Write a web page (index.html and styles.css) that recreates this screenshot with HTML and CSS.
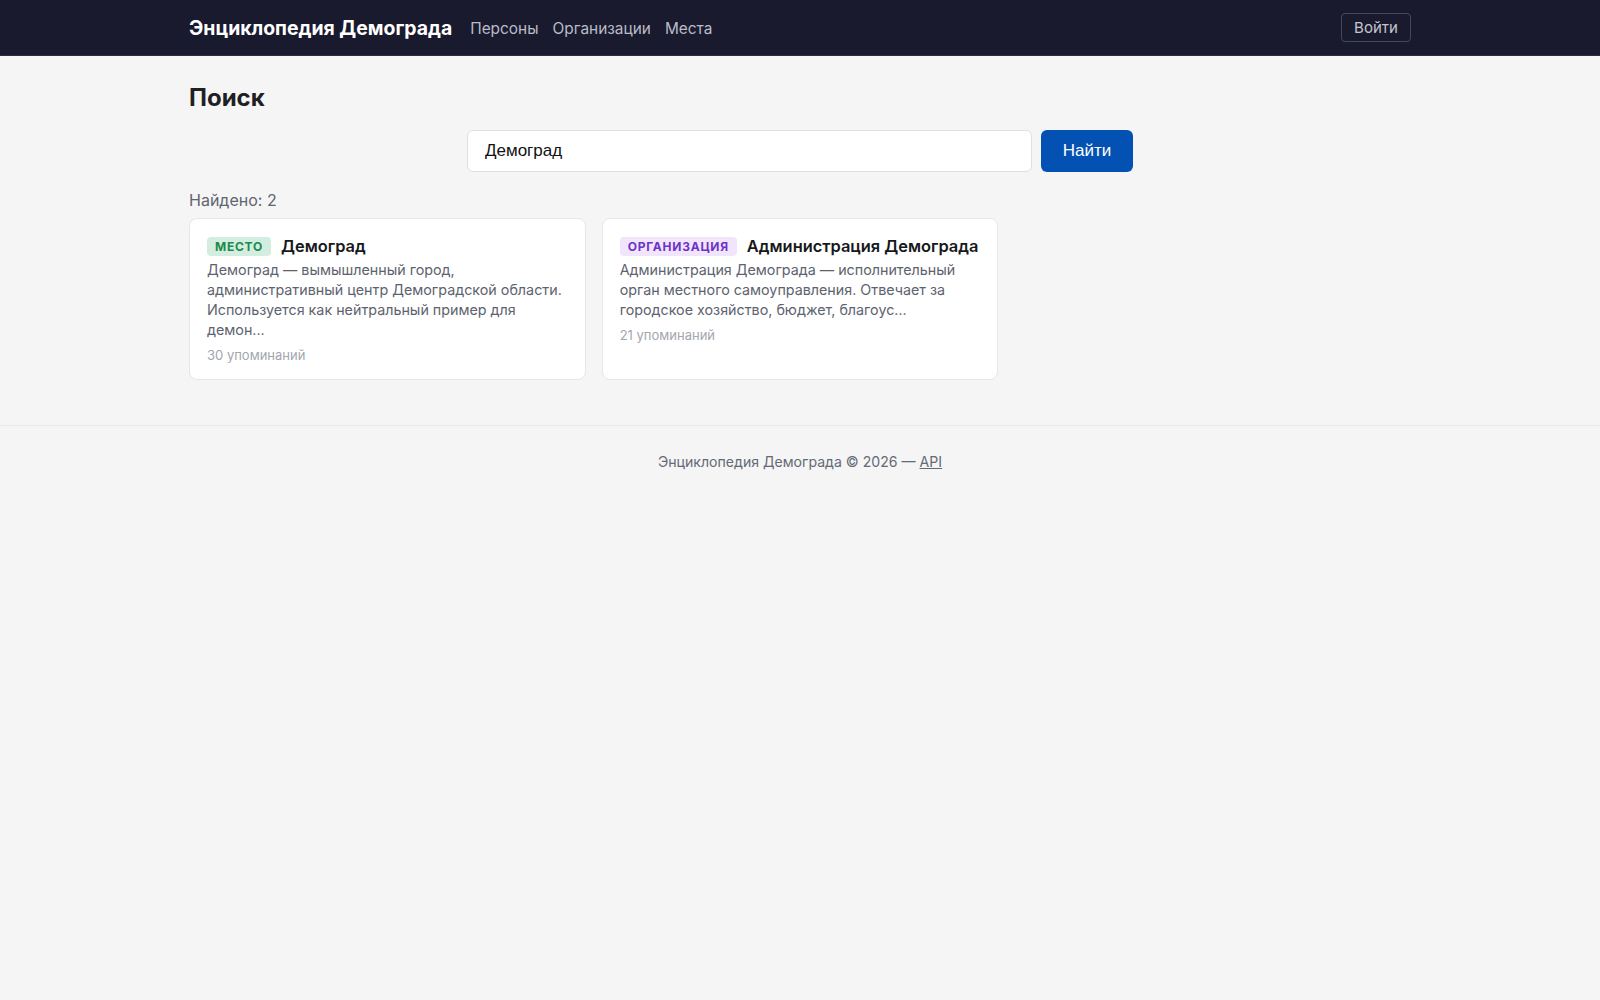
FILE: index.html
```html
<!DOCTYPE html>
<html lang="ru">
  <head>
    <meta charset="UTF-8" />
    <meta name="viewport" content="width=device-width, initial-scale=1.0" />
    <title>Поиск — Энциклопедия Демограда</title>
    <link rel="stylesheet" href="styles.css">
  </head>
  <body>
    <header>
      <div class="container header-inner">
        <a class="brand">Энциклопедия Демограда</a>
        <nav>
          <ul>
            <li><a>Персоны</a></li>
            <li><a>Организации</a></li>
            <li><a>Места</a></li>
          </ul>
        </nav>
        <button class="login">Войти</button>
      </div>
    </header>
    <main class="container">
      <h1>Поиск</h1>
      <form class="search-form">
        <input type="text" name="q" value="Демоград" />
        <button type="submit">Найти</button>
      </form>
      <p class="found">Найдено: 2</p>
      <div class="results">
        <div class="result-card">
          <div class="result-title">
            <span class="badge badge-place">Место</span>
            <h3>Демоград</h3>
          </div>
          <p class="result-desc">Демоград — вымышленный город, административный центр Демоградской области. Используется как нейтральный пример для демон...</p>
          <p class="result-meta">30 упоминаний</p>
        </div>
        <div class="result-card">
          <div class="result-title">
            <span class="badge badge-org">Организация</span>
            <h3>Администрация Демограда</h3>
          </div>
          <p class="result-desc">Администрация Демограда — исполнительный орган местного самоуправления. Отвечает за городское хозяйство, бюджет, благоус...</p>
          <p class="result-meta">21 упоминаний</p>
        </div>
      </div>
    </main>
    <footer>
      Энциклопедия Демограда © 2026 — <a>API</a>
    </footer>
  </body>
</html>
```

FILE: styles.css
```css
* {
  box-sizing: border-box;
}
body {
  margin: 0;
  background-color: #f5f5f5;
  color: #1f2023;
  font-family: Inter, "Noto Sans", sans-serif;
}
a {
  text-decoration: none;
  color: inherit;
  cursor: pointer;
}
.container {
  max-width: 1222px;
  margin: 0 auto;
}
header {
  background-color: #1a1a2e;
  height: 56px;
  border-bottom: 1px solid #2c2d42;
}
.header-inner {
  display: flex;
  align-items: center;
  height: 100%;
  gap: 18px;
}
.brand {
  color: white;
  font-weight: 700;
  font-size: 19.4px;
}
nav ul {
  list-style-type: none;
  display: flex;
  gap: 14px;
  margin: 0;
  padding: 0;
}
nav a {
  color: #b9bcc8;
  font-size: 15.4px;
}
.login {
  margin-left: auto;
  height: 29px;
  width: 70px;
  background: transparent;
  border: 1px solid #45475a;
  border-radius: 4px;
  color: #c3c6d0;
  font-family: Inter, sans-serif;
  font-size: 15px;
  cursor: pointer;
}
h1 {
  margin: 27px 0 18px;
  font-size: 24px;
  line-height: 29px;
  font-weight: 700;
}
.search-form {
  display: flex;
  gap: 9px;
  width: 666px;
  margin: 0 auto;
}
.search-form input {
  flex: 1;
  height: 42px;
  padding: 0 17px;
  border: 1px solid #dcdfe4;
  border-radius: 6px;
  background: white;
  font-family: "Liberation Sans", Arial, sans-serif;
  font-size: 17px;
  color: #111;
}
.search-form button {
  width: 92px;
  height: 42px;
  border: none;
  border-radius: 6px;
  background-color: #0352b3;
  color: white;
  font-family: "Liberation Sans", Arial, sans-serif;
  font-size: 17px;
  cursor: pointer;
}
.found {
  margin: 16px 0 6px;
  font-size: 16px;
  line-height: 24px;
  color: #5f6470;
}
.results {
  display: grid;
  grid-template-columns: repeat(3, minmax(0, 1fr));
  gap: 16px;
  padding-bottom: 45px;
}
.result-card {
  background: white;
  border: 1px solid #e6e7ea;
  border-radius: 8px;
  padding: 16px 17px 15px;
}
.result-title {
  display: flex;
  align-items: center;
  gap: 10px;
  height: 22px;
}
.result-title h3 {
  margin: 0;
  font-size: 16.4px;
  font-weight: 600;
  color: #17181b;
  white-space: nowrap;
}
.badge {
  text-transform: uppercase;
  font-size: 12px;
  font-weight: 700;
  letter-spacing: 0.75px;
  padding: 2px 8px;
  border-radius: 4px;
  line-height: 15px;
}
.badge-place {
  background-color: #d3ede0;
  color: #1b8a4b;
}
.badge-org {
  background-color: #f1e5fd;
  color: #6d33c8;
}
.result-desc {
  margin: 3px 0 0;
  font-size: 14.3px;
  line-height: 20px;
  color: #5d636e;
}
.result-meta {
  margin: 6px 0 0;
  font-size: 13px;
  line-height: 18px;
  color: #a2a6ae;
}
footer {
  border-top: 1px solid #eaeaea;
  padding: 26px 0;
  text-align: center;
  font-size: 14.1px;
  line-height: 20px;
  color: #646a75;
}
footer a {
  text-decoration: underline;
}
```
